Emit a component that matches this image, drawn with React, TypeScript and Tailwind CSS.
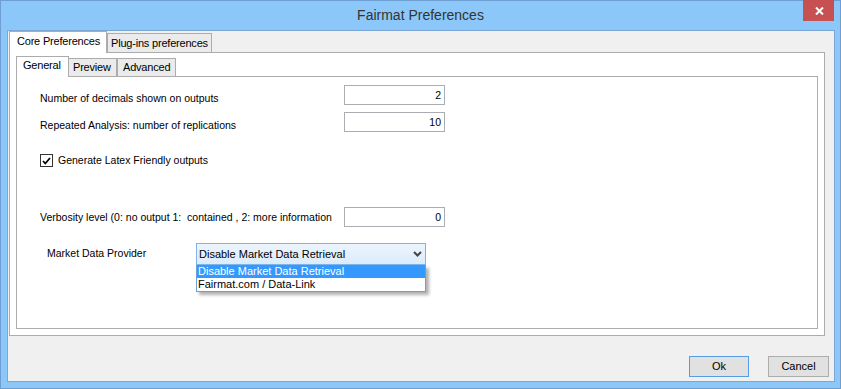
import React from 'react';

function TextBox({ value }: { value: string }) {
  return (
    <div className="w-[101px] h-[20px] shrink-0 border border-[#abadb3] bg-white flex items-center justify-end pr-[3px] text-[10.5px] leading-[13px]">
      {value}
    </div>
  );
}

export default function App() {
  return (
    <div className="w-[841px] h-[389px] border border-[#6e9ed2] bg-[#8bc7f8] flex flex-col font-['Liberation_Sans',Arial,sans-serif] text-black select-none">
      {/* Title bar */}
      <div className="relative h-[29px] shrink-0 flex justify-center pt-[6px]">
        <span className="text-[14px] leading-[16px] text-[#333]">Fairmat Preferences</span>
        <button className="absolute right-[6px] top-[-1px] w-[31px] h-[21px] bg-[#c75050] flex items-center justify-center pl-[2px]">
          <svg width="9" height="8" viewBox="0 0 9 8">
            <path d="M1 0.5 L8 7.5 M8 0.5 L1 7.5" stroke="white" strokeWidth="2" />
          </svg>
        </button>
      </div>

      {/* Client area */}
      <div className="ml-[6px] w-[828px] h-[352px] shrink-0 border border-[#7ea6d4] bg-[#f0f0f0] flex flex-col">
        <div className="pl-[1px]">
          <div className="w-[816px] flex flex-col">
            {/* Outer tabs */}
            <div className="flex items-end h-[21px] relative z-10 text-[11px] leading-[13px] tracking-[-0.2px]">
              <div className="h-[22px] -mb-px w-[98px] border border-b-0 border-[#acacac] bg-white pl-[7px] pt-[3px]">
                Core Preferences
              </div>
              <div className="h-[19px] w-[105px] border border-b-0 border-[#acacac] bg-[#ebebeb] pl-[3px] pt-[3px]">
                Plug-ins preferences
              </div>
            </div>

            {/* Outer panel */}
            <div className="h-[284px] border border-[#acacac] bg-white pt-[3px] px-[6px] pb-[6px] flex flex-col">
              {/* Inner tabs */}
              <div className="flex items-end h-[20px] relative z-10 text-[11px] leading-[13px] tracking-[-0.2px]">
                <div className="h-[21px] -mb-px w-[53px] border border-b-0 border-[#acacac] bg-white pl-[6px] pt-[2px]">
                  General
                </div>
                <div className="h-[18px] w-[48px] border border-l-0 border-b-0 border-[#acacac] bg-[#ebebeb] pl-[4px] pt-[2px]">
                  Preview
                </div>
                <div className="h-[18px] w-[59px] border border-b-0 border-[#acacac] bg-[#ebebeb] pl-[5px] pt-[2px]">
                  Advanced
                </div>
              </div>

              {/* Inner panel */}
              <div className="h-[253px] border border-[#acacac] bg-white">
                <div className="flex flex-col pl-[23px] pt-[8px] text-[10.5px] leading-[13px]">
                  <div className="flex">
                    <div className="w-[304px] pt-[7px]">Number of decimals shown on outputs</div>
                    <TextBox value="2" />
                  </div>
                  <div className="flex mt-[7px]">
                    <div className="w-[304px] pt-[7px]">Repeated Analysis: number of replications</div>
                    <TextBox value="10" />
                  </div>
                  <div className="flex items-start gap-[5px] mt-[22px]">
                    <div className="w-[13px] h-[13px] border border-[#333] bg-white flex items-center justify-center">
                      <svg width="9" height="8" viewBox="0 0 9 8">
                        <path d="M1 4 L3.3 6.5 L8 1" stroke="#000" strokeWidth="1.8" fill="none" />
                      </svg>
                    </div>
                    <div>Generate Latex Friendly outputs</div>
                  </div>
                  <div className="flex mt-[40px]">
                    <div className="w-[304px] pt-[4px] whitespace-pre">Verbosity level (0: no output 1:  contained , 2: more information</div>
                    <TextBox value="0" />
                  </div>
                  <div className="flex mt-[16px] pl-[7px]">
                    <div className="w-[149px] pt-[4px]">Market Data Provider</div>
                    <div className="relative w-[230px] h-[22px] border border-[#7eb4ea] bg-gradient-to-b from-[#ecf4fc] to-[#dcecfc] flex items-center pl-[2px] pr-[3px] text-[11px] leading-[13px]">
                      <span className="flex-1">Disable Market Data Retrieval</span>
                      <svg width="9" height="6" viewBox="0 0 9 6">
                        <path d="M1 1 L4.5 4.5 L8 1" stroke="#444" strokeWidth="2" fill="none" />
                      </svg>
                      {/* Open dropdown list */}
                      <div className="absolute left-[-1px] top-[21px] w-[230px] border border-t-0 border-[#6c9fd6] bg-white shadow-[3px_3px_3px_rgba(0,0,0,0.3)]">
                        <div className="h-[13px] bg-[#3399ff] text-white pl-[1px]">Disable Market Data Retrieval</div>
                        <div className="h-[13px] pl-[1px]">Fairmat.com / Data-Link</div>
                      </div>
                    </div>
                  </div>
                </div>
              </div>
            </div>
          </div>
        </div>

        {/* Buttons */}
        <div className="flex justify-end gap-[19px] pr-[5px] mt-[20px] text-[11px] leading-[13px]">
          <button className="w-[60px] h-[21px] border border-[#569de5] bg-[#e1e1e1] flex items-center justify-center">Ok</button>
          <button className="w-[61px] h-[21px] border border-[#adadad] bg-[#e1e1e1] flex items-center justify-center">Cancel</button>
        </div>
      </div>
    </div>
  );
}
